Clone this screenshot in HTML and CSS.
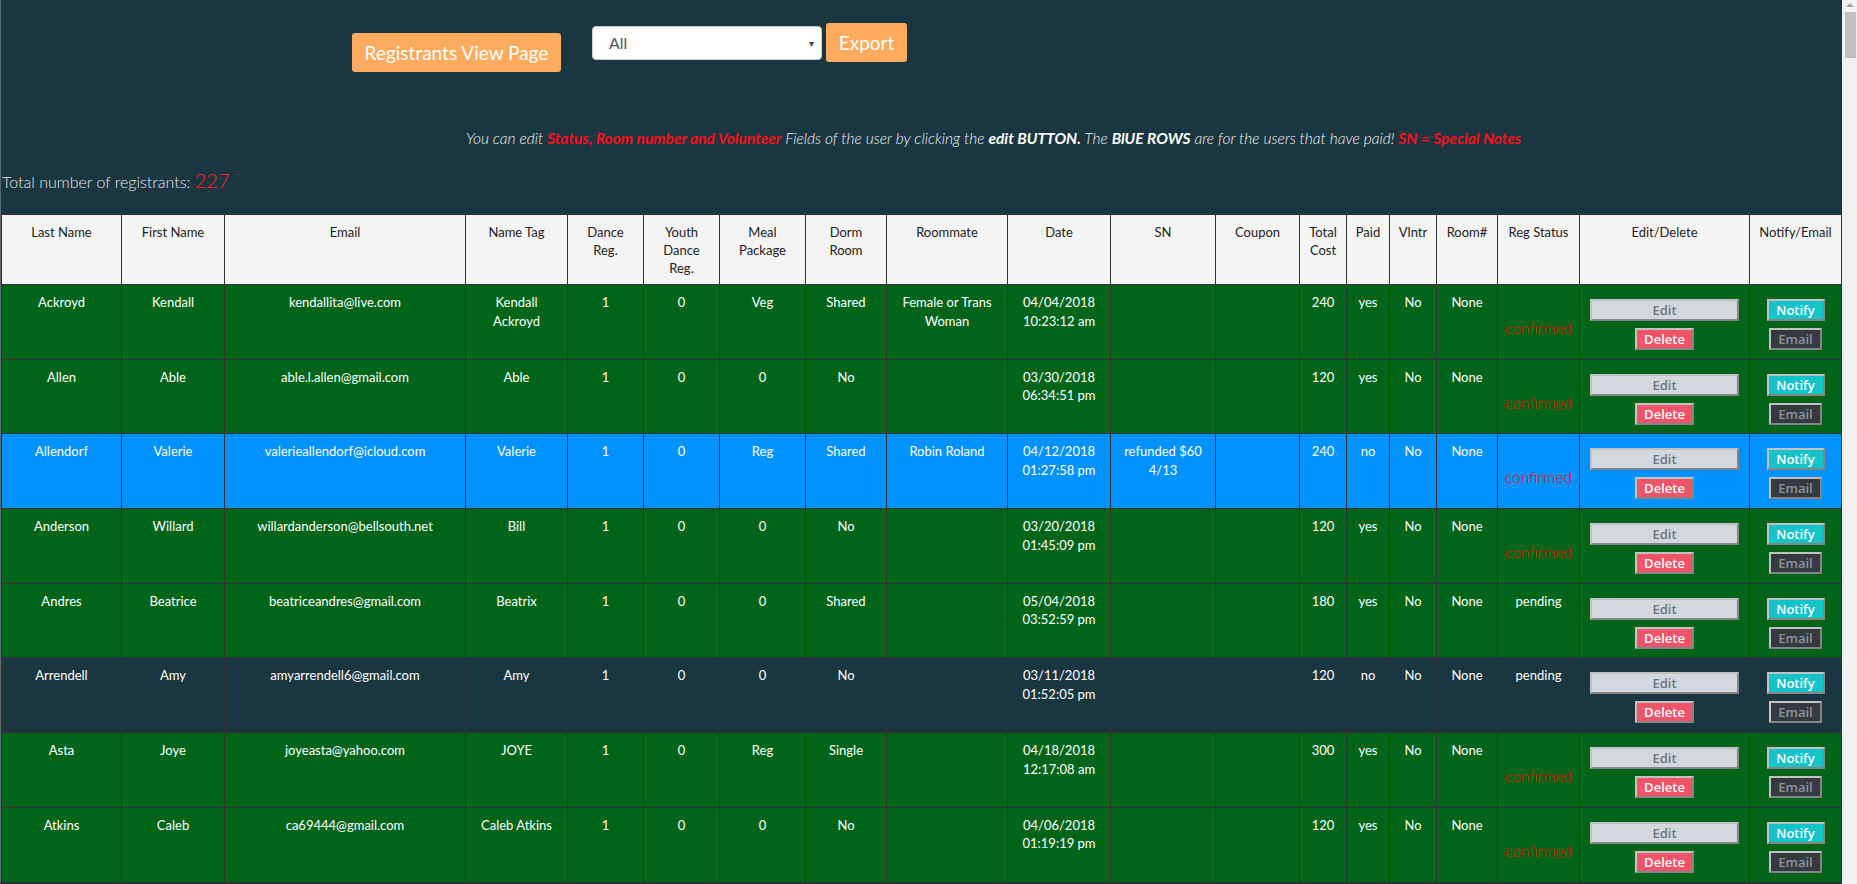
FILE: index.html
```html
<!DOCTYPE html>
<html lang="en">
<head>
<meta charset="utf-8">
<title>Registrants</title>
<link rel="stylesheet" href="styles.css">
</head>
<body>
<div class="toolbar">
  <button class="btn-orange btn-view">Registrants View Page</button>
  <div class="select">All<span class="caret">&#9662;</span></div>
  <button class="btn-orange btn-export">Export</button>
</div>
<p class="notice">You can edit <b class="red">Status, Room number and Volunteer</b> Fields of the user by clicking the <b>edit BUTTON.</b> The <b>BlUE ROWS</b> are for the users that have paid! <b class="red">SN = Special Notes</b></p>
<p class="total">Total number of registrants: <span class="count">227</span></p>
<table class="reg">
  <colgroup>
    <col class="c-last"><col class="c-first"><col class="c-email"><col class="c-tag"><col class="c-dance"><col class="c-youth"><col class="c-meal"><col class="c-dorm"><col class="c-mate"><col class="c-date"><col class="c-sn"><col class="c-coupon"><col class="c-cost"><col class="c-paid"><col class="c-vol"><col class="c-room"><col class="c-status"><col class="c-edit"><col class="c-notify">
  </colgroup>
  <thead>
    <tr>
      <th>Last Name</th><th>First Name</th><th>Email</th><th>Name Tag</th><th>Dance Reg.</th><th>Youth Dance Reg.</th><th>Meal Package</th><th>Dorm Room</th><th>Roommate</th><th>Date</th><th>SN</th><th>Coupon</th><th>Total Cost</th><th>Paid</th><th>Vlntr</th><th>Room#</th><th>Reg Status</th><th>Edit/Delete</th><th>Notify/Email</th>
    </tr>
  </thead>
  <tbody>
    <tr class="row-green">
      <td>Ackroyd</td><td>Kendall</td><td>kendallita@live.com</td><td>Kendall Ackroyd</td><td>1</td><td>0</td><td>Veg</td><td>Shared</td><td>Female or Trans Woman</td><td>04/04/2018 10:23:12 am</td><td></td><td></td><td>240</td><td>yes</td><td>No</td><td>None</td><td><span class="confirmed">confirmed</span></td>
      <td><button class="btn btn-edit">Edit</button><button class="btn btn-delete">Delete</button></td>
      <td><button class="btn btn-notify">Notify</button><button class="btn btn-email">Email</button></td>
    </tr>
    <tr class="row-green">
      <td>Allen</td><td>Able</td><td>able.l.allen@gmail.com</td><td>Able</td><td>1</td><td>0</td><td>0</td><td>No</td><td></td><td>03/30/2018 06:34:51 pm</td><td></td><td></td><td>120</td><td>yes</td><td>No</td><td>None</td><td><span class="confirmed">confirmed</span></td>
      <td><button class="btn btn-edit">Edit</button><button class="btn btn-delete">Delete</button></td>
      <td><button class="btn btn-notify">Notify</button><button class="btn btn-email">Email</button></td>
    </tr>
    <tr class="row-blue">
      <td>Allendorf</td><td>Valerie</td><td>valerieallendorf@icloud.com</td><td>Valerie</td><td>1</td><td>0</td><td>Reg</td><td>Shared</td><td>Robin Roland</td><td>04/12/2018 01:27:58 pm</td><td>refunded $60 4/13</td><td></td><td>240</td><td>no</td><td>No</td><td>None</td><td><span class="confirmed">confirmed</span></td>
      <td><button class="btn btn-edit">Edit</button><button class="btn btn-delete">Delete</button></td>
      <td><button class="btn btn-notify">Notify</button><button class="btn btn-email">Email</button></td>
    </tr>
    <tr class="row-green">
      <td>Anderson</td><td>Willard</td><td>willardanderson@bellsouth.net</td><td>Bill</td><td>1</td><td>0</td><td>0</td><td>No</td><td></td><td>03/20/2018 01:45:09 pm</td><td></td><td></td><td>120</td><td>yes</td><td>No</td><td>None</td><td><span class="confirmed">confirmed</span></td>
      <td><button class="btn btn-edit">Edit</button><button class="btn btn-delete">Delete</button></td>
      <td><button class="btn btn-notify">Notify</button><button class="btn btn-email">Email</button></td>
    </tr>
    <tr class="row-green">
      <td>Andres</td><td>Beatrice</td><td>beatriceandres@gmail.com</td><td>Beatrix</td><td>1</td><td>0</td><td>0</td><td>Shared</td><td></td><td>05/04/2018 03:52:59 pm</td><td></td><td></td><td>180</td><td>yes</td><td>No</td><td>None</td><td>pending</td>
      <td><button class="btn btn-edit">Edit</button><button class="btn btn-delete">Delete</button></td>
      <td><button class="btn btn-notify">Notify</button><button class="btn btn-email">Email</button></td>
    </tr>
    <tr class="row-dark">
      <td>Arrendell</td><td>Amy</td><td>amyarrendell6@gmail.com</td><td>Amy</td><td>1</td><td>0</td><td>0</td><td>No</td><td></td><td>03/11/2018 01:52:05 pm</td><td></td><td></td><td>120</td><td>no</td><td>No</td><td>None</td><td>pending</td>
      <td><button class="btn btn-edit">Edit</button><button class="btn btn-delete">Delete</button></td>
      <td><button class="btn btn-notify">Notify</button><button class="btn btn-email">Email</button></td>
    </tr>
    <tr class="row-green">
      <td>Asta</td><td>Joye</td><td>joyeasta@yahoo.com</td><td>JOYE</td><td>1</td><td>0</td><td>Reg</td><td>Single</td><td></td><td>04/18/2018 12:17:08 am</td><td></td><td></td><td>300</td><td>yes</td><td>No</td><td>None</td><td><span class="confirmed">confirmed</span></td>
      <td><button class="btn btn-edit">Edit</button><button class="btn btn-delete">Delete</button></td>
      <td><button class="btn btn-notify">Notify</button><button class="btn btn-email">Email</button></td>
    </tr>
    <tr class="row-green">
      <td>Atkins</td><td>Caleb</td><td>ca69444@gmail.com</td><td>Caleb Atkins</td><td>1</td><td>0</td><td>0</td><td>No</td><td></td><td>04/06/2018 01:19:19 pm</td><td></td><td></td><td>120</td><td>yes</td><td>No</td><td>None</td><td><span class="confirmed">confirmed</span></td>
      <td><button class="btn btn-edit">Edit</button><button class="btn btn-delete">Delete</button></td>
      <td><button class="btn btn-notify">Notify</button><button class="btn btn-email">Email</button></td>
    </tr>
  </tbody>
</table>
<div class="scrollbar" aria-hidden="true">
  <span class="scroll-arrow"></span>
  <span class="scroll-thumb"></span>
</div>
</body>
</html>
```

FILE: styles.css
```css
html {
  border-left: 1px solid #5a6a70;
  background: #1a3641;
}

body {
  margin: 0 15px 0 0;
  background: #1a3641;
  color: #fff;
  font-family: "Lato", "Open Sans", sans-serif;
}

.scrollbar {
  position: fixed;
  top: 0;
  right: 0;
  width: 15px;
  height: 100vh;
  background: #f1f1f1;
  display: flex;
  flex-direction: column;
  align-items: center;
}

.scroll-arrow {
  margin-top: 3px;
  width: 0;
  height: 0;
  border-left: 4px solid transparent;
  border-right: 4px solid transparent;
  border-bottom: 4px solid #a3a3a3;
}

.scroll-thumb {
  margin-top: 5px;
  margin-left: 1px;
  width: 11px;
  height: 46px;
  background: #c1c1c1;
}

.toolbar {
  display: flex;
  align-items: flex-start;
  padding: 23px 0 0 351px;
}

.btn-orange {
  background: #fdab5e;
  color: #fff;
  border: none;
  border-radius: 3px;
  font-family: "Lato", sans-serif;
  font-size: 19px;
  height: 39px;
  padding: 0;
}

.btn-view {
  margin-top: 10px;
  width: 209px;
}

.btn-export {
  width: 81px;
}

.select {
  margin: 3px 4px 0 31px;
  width: 230px;
  height: 34px;
  box-sizing: border-box;
  background: #fff;
  border: 1px solid #ccc;
  border-radius: 4px;
  color: #555;
  font-size: 16px;
  line-height: 32px;
  padding-left: 16px;
  display: flex;
  justify-content: space-between;
}

.caret {
  font-size: 10px;
  color: #444;
  padding-right: 7px;
}

.notice {
  margin: 55px 0 0;
  padding-left: 144px;
  text-align: center;
  font-size: 15.5px;
  line-height: 22px;
  font-style: italic;
  font-weight: 300;
  color: #f2f2f2;
}

.notice b {
  font-weight: 700;
  color: #fff;
}

.notice .red {
  color: #ff0d1a;
}

.total {
  margin: 19px 0 0 1px;
  font-size: 16px;
  line-height: 24px;
  font-weight: 300;
  color: #e6e6e6;
}

.count {
  color: #ff1f2a;
  font-size: 20px;
}

.reg {
  margin-top: 20px;
  width: 100%;
  table-layout: fixed;
  border-collapse: collapse;
  font-size: 13px;
}

.c-last { width: 120px; }
.c-first { width: 103px; }
.c-email { width: 241px; }
.c-tag { width: 102px; }
.c-dance { width: 76px; }
.c-youth { width: 76px; }
.c-meal { width: 86px; }
.c-dorm { width: 81px; }
.c-mate { width: 121px; }
.c-date { width: 103px; }
.c-sn { width: 105px; }
.c-coupon { width: 84px; }
.c-cost { width: 47px; }
.c-paid { width: 43px; }
.c-vol { width: 47px; }
.c-room { width: 61px; }
.c-status { width: 82px; }
.c-edit { width: 170px; }
.c-notify { width: 92px; }

.reg th {
  background: #f4f4f4;
  color: #222;
  font-weight: 400;
  line-height: 18px;
  padding: 8px 6px 7px;
  border: 1px solid #333;
  vertical-align: top;
  text-align: center;
}

.reg td {
  padding: 8px 6px 8.7px;
  line-height: 18.5px;
  border: 1px solid #333;
  vertical-align: top;
  text-align: center;
  color: #fff;
}

.row-green td { background: #006519; }
.row-blue td { background: #0092ff; }
.row-dark td { background: #1a3641; }

.confirmed {
  display: block;
  margin-top: 24px;
  color: #ff0000;
  font-size: 15.5px;
  line-height: 22px;
  font-weight: 300;
}

.btn {
  display: block;
  margin: 7px auto 0;
  height: 22px;
  box-sizing: border-box;
  padding: 0;
  border: 2px solid;
  border-color: #c2c2c2 #858585 #858585 #c2c2c2;
  font-family: "Open Sans", sans-serif;
  font-size: 13px;
  font-weight: 600;
  line-height: 18px;
}

.btn-edit {
  margin-top: 6px;
  width: 149px;
  background: #d2d8de;
  color: #6c757d;
}

.btn-delete {
  width: 59px;
  background: #ef5469;
  color: #fff;
}

.btn-notify {
  margin-top: 6px;
  width: 58px;
  background: #12c4c9;
  color: #fff;
}

.btn-email {
  width: 53px;
  background: #343a40;
  color: #8d949a;
}
```
